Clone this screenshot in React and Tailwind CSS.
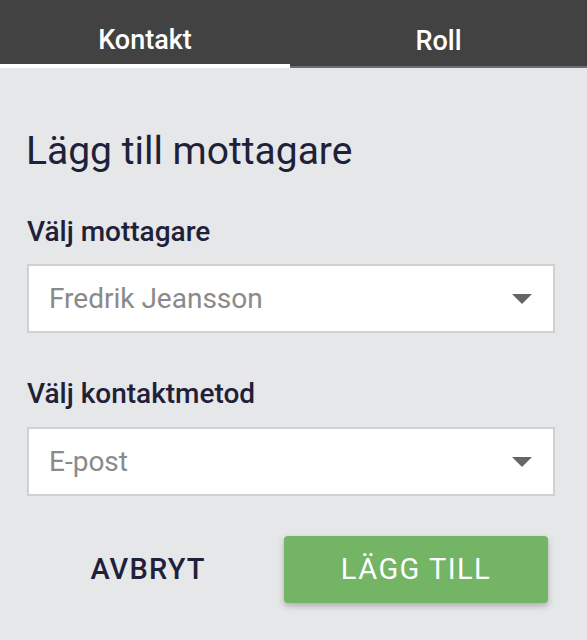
import React, { useState } from 'react';

const tabs = ['Kontakt', 'Roll'];

const SelectField = ({ value }) => (
    <button
        type="button"
        className="flex h-[69px] w-full items-center justify-between border-2 border-[#d0d0d0] bg-white pl-[20px] pr-[21px] text-left"
    >
        <span className="text-[28px] leading-none text-[#8a8a8a]">{value}</span>
        <svg width="20" height="10" viewBox="0 0 20 10" className="shrink-0">
            <path d="M0 0 H20 L10 10 Z" fill="#666666" />
        </svg>
    </button>
);

const App = () => {
    const [activeTab, setActiveTab] = useState(0);

    return (
        <div className="min-h-screen bg-[#e6e7e9] font-['Roboto',_'Liberation_Sans',_sans-serif]">
            {/* Tabs */}
            <div className="flex h-[68px] bg-[#424242]">
                {tabs.map((tab, i) => (
                    <button
                        key={tab}
                        type="button"
                        onClick={() => setActiveTab(i)}
                        className={
                            i === activeTab
                                ? 'w-[290px] border-b-4 border-white pt-4 text-[27px] font-medium leading-none text-white'
                                : 'flex-1 border-b-2 border-[#6e6e6e] pt-4 text-[27px] font-medium leading-none text-white'
                        }
                    >
                        <span className="block text-center">{tab}</span>
                    </button>
                ))}
            </div>

            <div className="pl-[27px] pr-[32px] pt-[64px]">
                <h2 className="-ml-[1px] text-[39px] font-normal leading-none text-[#1e2138]">
                    Lägg till mottagare
                </h2>

                <label className="mt-[47px] block text-[28px] font-medium leading-none text-[#1e2138]">
                    Välj mottagare
                </label>
                <div className="mt-[18px]">
                    <SelectField value="Fredrik Jeansson" />
                </div>

                <label className="mt-[47px] block text-[28px] font-medium leading-none text-[#1e2138]">
                    Välj kontaktmetod
                </label>
                <div className="mt-[19px]">
                    <SelectField value="E-post" />
                </div>

                <div className="mt-[40px] flex items-center pr-[7px]">
                    <button
                        type="button"
                        className="ml-[3px] flex h-[67px] w-[236px] items-center justify-center text-[29px] font-medium uppercase leading-none tracking-[0.04em] text-[#1e2138]"
                    >
                        Avbryt
                    </button>
                    <button
                        type="button"
                        className="ml-auto flex h-[67px] w-[264px] items-center justify-center rounded-[4px] bg-[#73b465] text-[29px] font-normal uppercase leading-none tracking-[0.05em] text-white shadow-[0_3px_6px_rgba(0,0,0,0.25)]"
                    >
                        Lägg till
                    </button>
                </div>
            </div>
        </div>
    );
};

export default App;
